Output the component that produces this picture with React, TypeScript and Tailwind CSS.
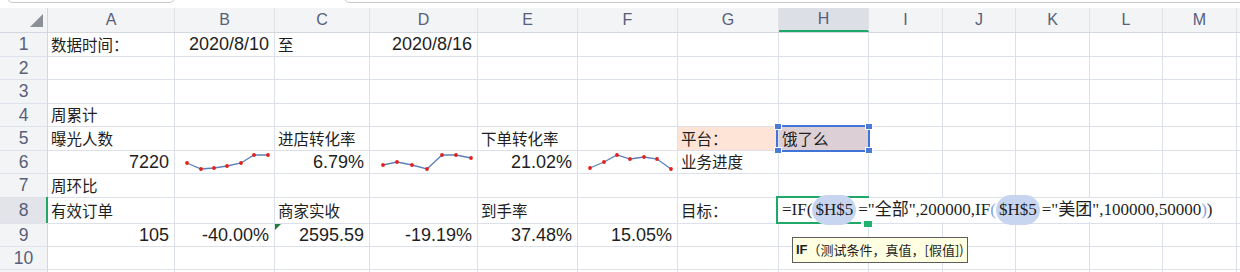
const NUM = "font-['Liberation_Sans',Arial,sans-serif] text-[18px]";
const CJK = "font-['Noto_Sans_CJK_SC',sans-serif] text-[15.5px]";
const HEAD = "font-['Liberation_Sans',Arial,sans-serif] text-[#56607a]";

const COLS = [
  "w-[48px]",
  "w-[127px]",
  "w-[100px]",
  "w-[95px]",
  "w-[108px]",
  "w-[100px]",
  "w-[100px]",
  "w-[101px]",
  "w-[90px]",
  "w-[74px]",
  "w-[73px]",
  "w-[74px]",
  "w-[73px]",
  "w-[74px]",
];
const LETTERS = ["", "A", "B", "C", "D", "E", "F", "G", "H", "I", "J", "K", "L", "M"];
const HEIGHTS = [
  "h-[24px]",
  "h-[23px]",
  "h-[24px]",
  "h-[23px]",
  "h-[24px]",
  "h-[23px]",
  "h-[24px]",
  "h-[26px]",
  "h-[23px]",
  "h-[23px]",
  "h-[23px]",
];

type Pt = [number, number];
type Cell = { t?: string; n?: boolean; bg?: string; spark?: Pt[] };

const SPARK_B: Pt[] = [[9, 12], [23, 18], [36, 17], [49, 15], [63, 12], [76, 4], [90, 4]];
const SPARK_D: Pt[] = [[10, 14], [24, 11], [39, 14], [54, 18], [69, 4], [83, 4], [98, 7]];
const SPARK_F: Pt[] = [[9, 17], [23, 11], [36, 4], [49, 8], [63, 6], [76, 8], [90, 18]];

const DATA: Record<number, Record<number, Cell>> = {
  1: { 1: { t: "数据时间：" }, 2: { t: "2020/8/10", n: true }, 3: { t: "至" }, 4: { t: "2020/8/16", n: true } },
  4: { 1: { t: "周累计" } },
  5: {
    1: { t: "曝光人数" },
    3: { t: "进店转化率" },
    5: { t: "下单转化率" },
    7: { t: "平台：", bg: "bg-[#fde4d7]" },
    8: { t: "饿了么", bg: "bg-[#dcd0d6]" },
  },
  6: {
    1: { t: "7220", n: true },
    2: { spark: SPARK_B },
    3: { t: "6.79%", n: true },
    4: { spark: SPARK_D },
    5: { t: "21.02%", n: true },
    6: { spark: SPARK_F },
    7: { t: "业务进度" },
  },
  7: { 1: { t: "周环比" } },
  8: { 1: { t: "有效订单" }, 3: { t: "商家实收" }, 5: { t: "到手率" }, 7: { t: "目标：" } },
  9: {
    1: { t: "105", n: true },
    2: { t: "-40.00%", n: true },
    3: { t: "2595.59", n: true },
    4: { t: "-19.19%", n: true },
    5: { t: "37.48%", n: true },
    6: { t: "15.05%", n: true },
  },
};

const Spark = ({ pts }: { pts: Pt[] }) => (
  <svg width="108" height="22" className="block shrink-0">
    <polyline
      points={pts.map((p) => p.join(",")).join(" ")}
      fill="none"
      stroke="#5b80ba"
      strokeWidth="1.3"
    />
    {pts.map((p, i) => (
      <circle key={i} cx={p[0]} cy={p[1]} r="1.9" fill="#e5201b" />
    ))}
  </svg>
);

const Pill = ({ children }: { children: string }) => (
  <span className="rounded-full bg-[#c8d5f1] px-[3px] py-[2px]">{children}</span>
);

export default function App() {
  return (
    <div className="relative w-[1240px] h-[272px] overflow-hidden bg-white text-[#1e1e1e]">
      {/* toolbar edges above the sheet */}
      <div className="flex h-[8px] overflow-hidden">
        <div className="ml-[6px] w-[170px] h-[24px] -mt-[21px] shrink-0 rounded-[7px] border border-[#c6c8cc]" />
        <div className="ml-[167px] w-[920px] h-[24px] -mt-[21px] shrink-0 rounded-[7px] border border-[#c6c8cc]" />
      </div>

      {/* column headers */}
      <div className="flex h-[25px] bg-[#f3f4f6] border-b border-[#d3d7df]">
        {COLS.map((w, i) => (
          <div
            key={i}
            className={`${w} shrink-0 flex items-center justify-center border-r ${
              i === 0 ? "border-[#d3d7df] relative" : "border-[#e1e3e9]"
            } ${i === 8 ? "bg-[#dcdfe6] border-b-2 border-b-[#1fa867]" : ""} ${HEAD} text-[16px]`}
          >
            {i === 0 ? (
              <div className="absolute right-[4px] bottom-[5px] w-0 h-0 border-l-[13px] border-l-transparent border-b-[13px] border-b-[#8a8f98]" />
            ) : (
              LETTERS[i]
            )}
          </div>
        ))}
        <div className="flex-1" />
      </div>

      {/* rows */}
      {HEIGHTS.map((h, r) => {
        const row = r + 1;
        const cells = DATA[row] || {};
        return (
          <div key={row} className={`flex ${h}`}>
            <div
              className={`${COLS[0]} shrink-0 flex items-center justify-center border-r border-b border-r-[#d3d7df] border-b-[#dfe2ea] ${
                row === 8 ? "bg-[#e2e4ea]" : "bg-[#f3f4f6]"
              } ${HEAD} text-[17.5px]`}
            >
              {row <= 10 ? row : ""}
            </div>
            {COLS.slice(1).map((w, ci) => {
              const c = cells[ci + 1] || {};
              return (
                <div
                  key={ci}
                  className={`${w} shrink-0 flex items-center overflow-visible whitespace-nowrap border-r border-b border-[#dbe0ec] ${
                    c.bg || ""
                  } ${c.n ? `justify-end pr-[5px] ${NUM}` : `justify-start pl-[3px] ${CJK}`}`}
                >
                  {c.spark ? <Spark pts={c.spark} /> : c.t}
                </div>
              );
            })}
            <div className="flex-1 border-b border-[#dbe0ec]" />
          </div>
        );
      })}

      {/* selection on H5 */}
      <div className="absolute left-[776px] top-[125px] w-[94px] h-[27px] border-[2.5px] border-[#4273d6]" />
      <div className="absolute left-[774px] top-[123px] w-[8px] h-[7px] bg-[#4a7ad8] border border-white" />
      <div className="absolute left-[865px] top-[123px] w-[8px] h-[7px] bg-[#4a7ad8] border border-white" />
      <div className="absolute left-[774px] top-[147px] w-[8px] h-[7px] bg-[#4a7ad8] border border-white" />
      <div className="absolute left-[865px] top-[147px] w-[8px] h-[7px] bg-[#4a7ad8] border border-white" />

      {/* error marker on C9 */}
      <div className="absolute left-[275px] top-[224px] w-0 h-0 border-t-[6px] border-t-[#1e7e3d] border-r-[6px] border-r-transparent" />

      {/* active row marker */}
      <div className="absolute left-[46px] top-[197px] w-[2px] h-[26px] bg-[#1fa867]" />

      {/* formula editor in H8 */}
      <div className="absolute left-[778px] top-[198px] w-[440px] h-[24px] bg-white" />
      <div className="absolute left-[776px] top-[196px] w-[93px] h-[2px] bg-[#1fa867]" />
      <div className="absolute left-[776px] top-[196px] w-[2px] h-[28px] bg-[#1fa867]" />
      <div className="absolute left-[776px] top-[222px] w-[85px] h-[2px] bg-[#1fa867]" />
      <div className="absolute left-[864px] top-[221px] w-[8px] h-[6px] bg-[#1fb36f]" />
      <div className="absolute left-[782px] top-[198px] h-[24px] flex items-center whitespace-nowrap font-['Liberation_Serif','Noto_Sans_CJK_SC',serif] text-[17px] text-[#1e1e1e]">
        <span>=IF(</span>
        <Pill>$H$5</Pill>
        <span className="ml-[2px]">="全部",200000,IF</span>
        <span className="text-[#86a3e2]">(</span>
        <Pill>$H$5</Pill>
        <span className="ml-[2px]">="美团",100000,50000</span>
        <span className="text-[#86a3e2]">)</span>
        <span>)</span>
      </div>

      {/* function hint */}
      <div className="absolute left-[792px] top-[237px] w-[176px] h-[26px] flex items-center pl-[3px] bg-[#ffffe2] border border-[#5c5c5c] whitespace-nowrap font-['Noto_Sans_CJK_SC',sans-serif] text-[13px] text-[#1e1e1e]">
        <span className="font-bold font-['Liberation_Sans',sans-serif]">IF</span>
        <span>（测试条件，真值，[假值])</span>
      </div>
    </div>
  );
}
